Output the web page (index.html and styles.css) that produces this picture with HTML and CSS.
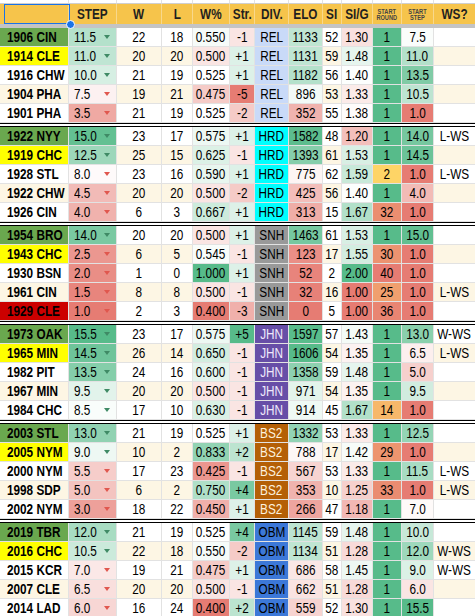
FILE: index.html
```html
<!DOCTYPE html>
<html>
<head>
<meta charset="utf-8">
<title>Division standings</title>
<link rel="stylesheet" href="styles.css">
</head>
<body>
<div class="sheet">
  <div class="row top">
    <div class="c"></div><div class="c"></div><div class="c"></div><div class="c"></div><div class="c"></div><div class="c"></div><div class="c"></div><div class="c"></div><div class="c"></div><div class="c"></div><div class="c"></div><div class="c"></div><div class="c"></div>
  </div>
  <div class="row head">
    <div class="c"></div>
    <div class="c"><span class="t">STEP</span></div>
    <div class="c"><span class="t">W</span></div>
    <div class="c"><span class="t">L</span></div>
    <div class="c"><span class="t">W%</span></div>
    <div class="c"><span class="t">Str.</span></div>
    <div class="c"><span class="t">DIV.</span></div>
    <div class="c"><span class="t">ELO</span></div>
    <div class="c"><span class="t">SI</span></div>
    <div class="c"><span class="t">SI/G</span></div>
    <div class="c"><span class="small">START<br>ROUND</span></div>
    <div class="c"><span class="small">START<br>STEP</span></div>
    <div class="c"><span class="t">WS?</span></div>
  </div>
  <div class="freeze"></div>
  <div id="groups"></div>
  <div class="selbox"></div>
  <span class="handle"></span>
</div>
<script src="script.js"></script>
</body>
</html>
```

FILE: styles.css
```css
html, body {
  margin: 0;
  padding: 0;
  background: #ffffff;
  overflow: hidden;
}
body {
  font-family: "Liberation Sans", Arial, sans-serif;
  font-size: 14px;
  color: #000000;
}
.sheet {
  position: relative;
  width: 475px;
}
.row {
  display: grid;
  grid-template-columns: 69px 48px 45px 31px 37px 25px 34px 34px 19px 31px 29px 32px 42px;
  height: 19px;
}
.c {
  box-sizing: border-box;
  border-right: 1px solid #e2e2e2;
  border-bottom: 1px solid #e2e2e2;
  display: flex;
  align-items: center;
  justify-content: center;
  overflow: hidden;
  white-space: nowrap;
  line-height: 18px;
}
.t {
  display: inline-block;
  transform: scaleX(0.84);
}
.row.top {
  height: 4px;
}
.row.top .c {
  border-bottom: 1px solid #cfcfcf;
}
.row.head {
  height: 20px;
  background: #f6c44b;
}
.row.head .c {
  border-right: 1px solid #f8d88c;
  border-bottom: none;
  font-weight: bold;
  color: #1f1f1f;
  line-height: 20px;
}
.small {
  display: inline-block;
  font-size: 6.4px;
  line-height: 6px;
  font-weight: bold;
  color: #444444;
  text-align: center;
  transform: scaleX(0.88);
  padding-top: 1px;
}
.freeze {
  height: 4px;
  background: #c4c4c4;
}
.sep {
  height: 2px;
  border-top: 1px solid #000000;
  border-bottom: 1px solid #000000;
  background: #ffffff;
}
.band {
  background: #fdf6e4;
}
.team {
  justify-content: flex-start;
  padding-left: 7px;
  font-weight: bold;
}
.team .t {
  transform-origin: left center;
}
.lead {
  background: #6aa84f;
}
.second {
  background: #ffff00;
}
.redteam {
  background: #cc0000;
}
.step {
  justify-content: space-between;
  padding: 0 6px 0 5px;
}
.step .t {
  transform-origin: left center;
}
.arrow {
  width: 0;
  height: 0;
  border-left: 3px solid transparent;
  border-right: 3px solid transparent;
  border-top: 4px solid #3f8a65;
}
.arrow.down {
  border-top-color: #e0574e;
}
.div-rel { background: #c9daf8; }
.div-hrd { background: #00ffff; }
.div-snh { background: #999999; }
.div-jhn { background: #674ea7; color: #efe9fb; }
.div-bs2 { background: #b45f06; color: #fdf1de; }
.div-obm { background: #3c78d8; }
.selbox {
  position: absolute;
  left: 4px;
  top: 4px;
  width: 66px;
  height: 20px;
  box-sizing: border-box;
  border: 1px solid #1a73e8;
}
.handle {
  position: absolute;
  left: 66px;
  top: 20px;
  width: 7px;
  height: 7px;
  border-radius: 50%;
  background: #1a73e8;
  border: 1px solid #ffffff;
}
```

FILE: script.js
```js
var D = [
  ["1906 CIN", 11.5, 22, 18, 0.550, -1, "REL", 1133, 52, 1.30, 1, 7.5, ""],
  ["1914 CLE", 11.0, 20, 20, 0.500, 1, "REL", 1131, 59, 1.48, 1, 11.0, ""],
  ["1916 CHW", 10.0, 21, 19, 0.525, 1, "REL", 1182, 56, 1.40, 1, 13.5, ""],
  ["1904 PHA", 7.5, 19, 21, 0.475, -5, "REL", 896, 53, 1.33, 1, 10.5, ""],
  ["1901 PHA", 3.5, 21, 19, 0.525, -2, "REL", 352, 55, 1.38, 1, 1.0, ""],
  ["1922 NYY", 15.0, 23, 17, 0.575, 1, "HRD", 1582, 48, 1.20, 1, 14.0, "L-WS"],
  ["1919 CHC", 12.5, 25, 15, 0.625, -1, "HRD", 1393, 61, 1.53, 1, 14.5, ""],
  ["1928 STL", 8.0, 23, 16, 0.590, 1, "HRD", 775, 62, 1.59, 2, 1.0, "L-WS"],
  ["1922 CHW", 4.5, 20, 20, 0.500, -2, "HRD", 425, 56, 1.40, 1, 4.0, ""],
  ["1926 CIN", 4.0, 6, 3, 0.667, 1, "HRD", 313, 15, 1.67, 32, 1.0, ""],
  ["1954 BRO", 14.0, 20, 20, 0.500, 1, "SNH", 1463, 61, 1.53, 1, 15.0, ""],
  ["1943 CHC", 2.5, 6, 5, 0.545, -1, "SNH", 123, 17, 1.55, 30, 1.0, ""],
  ["1930 BSN", 2.0, 1, 0, 1.000, 1, "SNH", 52, 2, 2.00, 40, 1.0, ""],
  ["1961 CIN", 1.5, 8, 8, 0.500, -1, "SNH", 32, 16, 1.00, 25, 1.0, "L-WS"],
  ["1929 CLE", 1.0, 2, 3, 0.400, -3, "SNH", 0, 5, 1.00, 36, 1.0, "", "red"],
  ["1973 OAK", 15.5, 23, 17, 0.575, 5, "JHN", 1597, 57, 1.43, 1, 13.0, "W-WS"],
  ["1965 MIN", 14.5, 26, 14, 0.650, -1, "JHN", 1606, 54, 1.35, 1, 6.5, "L-WS"],
  ["1982 PIT", 13.5, 24, 16, 0.600, -1, "JHN", 1358, 59, 1.48, 1, 5.0, ""],
  ["1967 MIN", 9.5, 20, 20, 0.500, -1, "JHN", 971, 54, 1.35, 1, 9.5, ""],
  ["1984 CHC", 8.5, 17, 10, 0.630, -1, "JHN", 914, 45, 1.67, 14, 1.0, ""],
  ["2003 STL", 13.0, 21, 19, 0.525, 1, "BS2", 1332, 53, 1.33, 1, 12.5, ""],
  ["2005 NYM", 9.0, 10, 2, 0.833, 2, "BS2", 788, 17, 1.42, 29, 1.0, ""],
  ["2000 NYM", 5.5, 17, 23, 0.425, -1, "BS2", 567, 53, 1.33, 1, 11.5, "L-WS"],
  ["1998 SDP", 5.0, 6, 2, 0.750, 4, "BS2", 353, 10, 1.25, 33, 1.0, "L-WS"],
  ["2002 NYM", 3.0, 18, 22, 0.450, 1, "BS2", 266, 47, 1.18, 1, 7.0, ""],
  ["2019 TBR", 12.0, 21, 19, 0.525, 4, "OBM", 1145, 59, 1.48, 1, 10.0, ""],
  ["2016 CHC", 10.5, 22, 18, 0.550, -2, "OBM", 1134, 51, 1.28, 1, 12.0, "W-WS"],
  ["2015 KCR", 7.0, 19, 21, 0.475, 1, "OBM", 686, 58, 1.45, 1, 9.0, "W-WS"],
  ["2007 CLE", 6.5, 20, 20, 0.500, -1, "OBM", 662, 51, 1.28, 1, 6.0, ""],
  ["2014 LAD", 6.0, 16, 24, 0.400, 2, "OBM", 559, 52, 1.30, 1, 15.5, ""]
];

var RED = [230, 124, 115], WHITE = [255, 255, 255], GREEN = [87, 187, 138], YEL = [255, 214, 102];

function mix(a, b, t) {
  if (!(t > 0)) t = 0;
  if (t > 1) t = 1;
  return "rgb(" + a.map(function (x, i) { return Math.round(x + (b[i] - x) * t); }).join(",") + ")";
}
function stats(col) {
  var v = D.map(function (r) { return r[col]; }).sort(function (a, b) { return a - b; });
  var n = v.length;
  var mid = n % 2 ? v[(n - 1) / 2] : (v[n / 2 - 1] + v[n / 2]) / 2;
  return { min: v[0], max: v[n - 1], mid: mid };
}
function rwg(col) {
  var s = stats(col);
  return function (x) {
    if (x <= s.mid) return mix(WHITE, RED, s.mid === s.min ? 0 : (s.mid - x) / (s.mid - s.min));
    return mix(WHITE, GREEN, (x - s.mid) / (s.max - s.mid));
  };
}
function gyr(col) {
  var s = stats(col);
  return function (x) {
    if (x <= s.mid) return mix(GREEN, YEL, s.mid === s.min ? 0 : (x - s.min) / (s.mid - s.min));
    return mix(YEL, RED, (x - s.mid) / (s.max - s.mid));
  };
}

var cStep = rwg(1), cW = rwg(4), cStr = rwg(5), cElo = rwg(7), cSig = rwg(9), cSr = gyr(10), cSs = rwg(11);
var stepMid = stats(1).mid;

function cell(row, cls, text, bg) {
  var d = document.createElement("div");
  d.className = "c" + (cls ? " " + cls : "");
  if (text !== undefined && text !== "") {
    var s = document.createElement("span");
    s.className = "t";
    s.textContent = text;
    d.appendChild(s);
  }
  if (bg) d.style.background = bg;
  row.appendChild(d);
  return d;
}

var host = document.getElementById("groups");
for (var g = 0; g < 6; g++) {
  if (g > 0) {
    var sep = document.createElement("div");
    sep.className = "sep";
    host.appendChild(sep);
  }
  for (var i = 0; i < 5; i++) {
    var r = D[g * 5 + i];
    var band = i % 2 === 1 ? "band" : "";
    var row = document.createElement("div");
    row.className = "row";
    var tcls = "team " + (r[13] === "red" ? "redteam" : i === 0 ? "lead" : i === 1 ? "second" : band);
    cell(row, tcls, r[0]);
    var st = cell(row, "step", r[1].toFixed(1), cStep(r[1]));
    var ar = document.createElement("span");
    ar.className = "arrow" + (r[1] < stepMid ? " down" : "");
    st.appendChild(ar);
    cell(row, band, String(r[2]));
    cell(row, band, String(r[3]));
    cell(row, "", r[4].toFixed(3), cW(r[4]));
    cell(row, "", r[5] > 0 ? "+" + r[5] : String(r[5]), cStr(r[5]));
    cell(row, "div-" + r[6].toLowerCase(), r[6]);
    cell(row, "", String(r[7]), cElo(r[7]));
    cell(row, band, String(r[8]));
    cell(row, "", r[9].toFixed(2), cSig(r[9]));
    cell(row, "", String(r[10]), cSr(r[10]));
    cell(row, "", r[11].toFixed(1), cSs(r[11]));
    cell(row, band, r[12]);
    host.appendChild(row);
  }
}
```
